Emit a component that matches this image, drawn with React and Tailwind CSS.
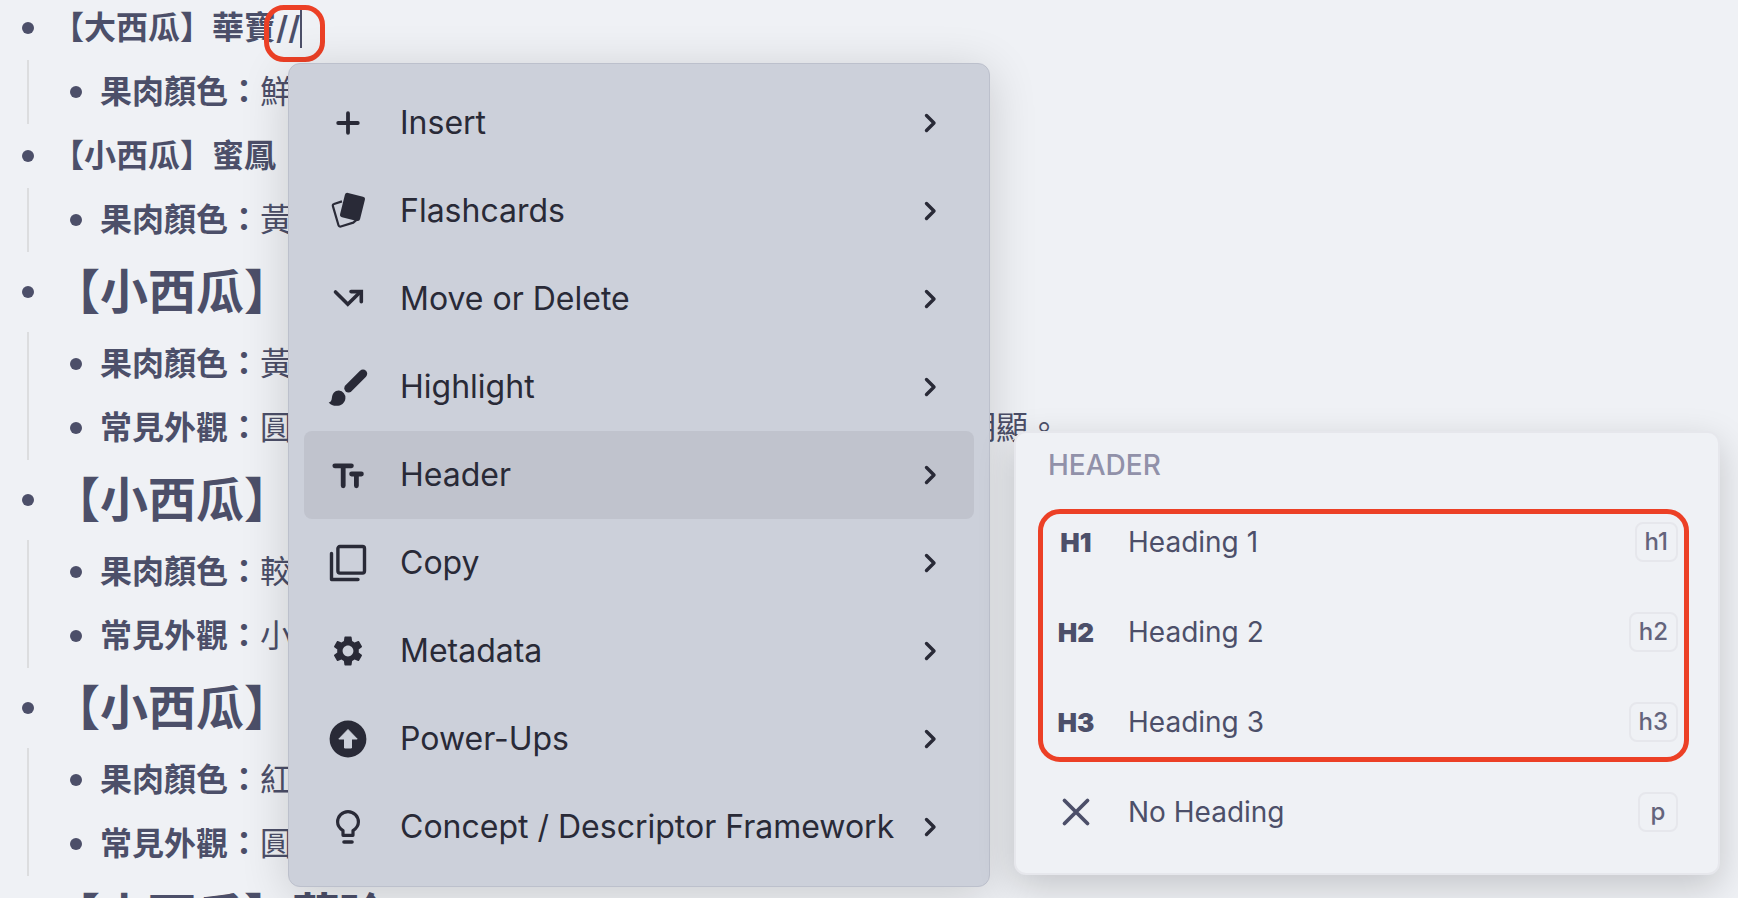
import React from "react";
import { MdSettings } from "react-icons/md";

const outline = [
    { title: "【大西瓜】華寶", typing: "//", children: [{ label: "果肉顏色", start: "鮮" }] },
    { title: "【小西瓜】蜜鳳", children: [{ label: "果肉顏色", start: "黃" }] },
    {
        title: "【小西瓜】",
        big: true,
        children: [
            { label: "果肉顏色", start: "黃" },
            { label: "常見外觀", start: "圓", end: "明顯。" },
        ],
    },
    {
        title: "【小西瓜】",
        big: true,
        children: [
            { label: "果肉顏色", start: "較" },
            { label: "常見外觀", start: "小" },
        ],
    },
    {
        title: "【小西瓜】",
        big: true,
        children: [
            { label: "果肉顏色", start: "紅" },
            { label: "常見外觀", start: "圓" },
        ],
    },
    { title: "【小西瓜】華玲", big: true, children: [] },
];

const PlusIcon = () => (
    <svg viewBox="0 0 40 40" className="w-10 h-10" fill="none" stroke="currentColor" strokeWidth="3.8" strokeLinecap="round">
        <path d="M20 10.200v19.600M10.200 20h19.600" />
    </svg>
);

const CardsIcon = () => (
    <svg viewBox="0 0 40 40" className="w-10 h-10">
        <path d="M14 10.400L6 13a1.600 1.600 0 0 0-1.100 2.100l5.600 19.200a1.800 1.800 0 0 0 2.300 1.200l12.500-3.900 3.500-3" fill="none" stroke="currentColor" strokeWidth="2.2" strokeLinejoin="round" />
        <rect x="14.200" y="3.400" width="20.600" height="25" rx="2.600" transform="rotate(14 24.500 15.900)" fill="currentColor" />
    </svg>
);

const MoveIcon = () => (
    <svg viewBox="0 0 40 40" className="w-10 h-10" fill="none" stroke="currentColor" strokeWidth="3.600" strokeLinecap="round" strokeLinejoin="miter">
        <path d="M7.500 13L19.800 25.300 32.500 12.800" />
        <path d="M23 12.600h10.300v10.200" />
    </svg>
);

const BrushIcon = () => (
    <svg viewBox="0 0 40 40" className="w-10 h-10">
        <path d="M20.500 21.300L35 6.800" stroke="currentColor" strokeWidth="8.400" strokeLinecap="round" />
        <path d="M11 23.600a7 7 0 0 1 6.400 7.800c-.500 4.600-4.200 7.400-9 7.400-3.200 0-6-1-7.700-3.400 2.300-.400 2.800-1.700 3.200-4.700.600-4.200 3-7.300 7.100-7.100z" fill="currentColor" />
    </svg>
);

const HeaderIcon = () => (
    <svg viewBox="0 0 40 40" className="w-10 h-10" fill="none" stroke="currentColor" strokeWidth="4.800" strokeLinecap="round">
        <path d="M6.800 10.800h16.600M15.200 10.800v20" />
        <path d="M23.600 19h9.800M28.400 19v11.800" />
    </svg>
);

const CopyIcon = () => (
    <svg viewBox="0 0 40 40" className="w-10 h-10" fill="none" stroke="currentColor" strokeWidth="3.400" strokeLinecap="round" strokeLinejoin="round">
        <rect x="9.900" y="3.500" width="26.600" height="26.600" rx="2" />
        <path d="M3.500 10.500V36.500H30" />
    </svg>
);

const PowerIcon = () => (
    <svg viewBox="0 0 40 40" className="w-10 h-10">
        <circle cx="20" cy="20" r="18.400" fill="currentColor" />
        <path d="M20 10.500l9.200 9.500h-5.700v9h-7v-9h-5.700z" fill="#ccd0da" stroke="#ccd0da" strokeWidth="1" strokeLinejoin="round" />
    </svg>
);

const BulbIcon = () => (
    <svg viewBox="0 0 40 40" className="w-10 h-10" fill="none" stroke="currentColor" strokeWidth="3.200">
        <path d="M15 28.300v-4.700c-3.300-2.200-5.400-5-5.400-8.600a10.400 10.400 0 0 1 20.800 0c0 3.600-2.100 6.400-5.400 8.600v4.700z" strokeLinejoin="round" />
        <path d="M16 35h8" strokeWidth="3.600" strokeLinecap="round" />
    </svg>
);

const menu = [
    { name: "Insert", icon: <PlusIcon /> },
    { name: "Flashcards", icon: <CardsIcon /> },
    { name: "Move or Delete", icon: <MoveIcon /> },
    { name: "Highlight", icon: <BrushIcon /> },
    { name: "Header", icon: <HeaderIcon />, active: true },
    { name: "Copy", icon: <CopyIcon /> },
    { name: "Metadata", icon: <MdSettings className="w-9 h-9" /> },
    { name: "Power-Ups", icon: <PowerIcon /> },
    { name: "Concept / Descriptor Framework", icon: <BulbIcon /> },
];

const headings = [
    { mark: "H1", name: "Heading 1", shortcut: "h1" },
    { mark: "H2", name: "Heading 2", shortcut: "h2" },
    { mark: "H3", name: "Heading 3", shortcut: "h3" },
];

const Bullet = () => <span className="w-3 h-3 shrink-0 rounded-full bg-[#4c4f69]" />;

const Chevron = () => (
    <svg viewBox="0 0 20 20" className="w-5 h-5 shrink-0" fill="none" stroke="currentColor" strokeWidth="3.400" strokeLinecap="round" strokeLinejoin="round">
        <path d="M6.500 2.500L14 10l-7.500 7.500" />
    </svg>
);

const HeadingItem = ({ mark, name, shortcut }) => (
    <button className="h-[90px] w-full flex items-center pl-8 pr-10 text-left">
        <span className="w-14 flex justify-center text-[26px] font-black">{mark}</span>
        <span className="flex-1 pl-6 text-[28px]">{name}</span>
        <kbd className="h-10 min-w-10 flex items-center justify-center rounded-lg border-2 border-[#e6e7ec] px-2 [font-family:Inter,sans-serif] text-2xl font-medium text-[#64647c]">
            {shortcut}
        </kbd>
    </button>
);

const App = () => {
    return (
        <div className="relative h-screen overflow-hidden bg-[#eff1f5] [font-family:Inter,'Noto_Sans_CJK_TC',sans-serif] text-[#4c4f69]">
            <ul className="-mt-1 text-[32px] leading-[64px] whitespace-nowrap">
                {outline.map((item, i) => (
                    <li key={i}>
                        <div className={item.big ? "h-20 flex items-center pl-[22px] text-5xl font-bold" : "h-16 flex items-center pl-[22px] font-bold"}>
                            <Bullet />
                            <span className="pl-[18px]">{item.title}</span>
                            {item.typing && <span className="font-semibold">{item.typing}</span>}
                            {item.typing && <span className="w-[2px] h-10 bg-[#4c4f69]" />}
                        </div>
                        {item.children.length > 0 && (
                            <ul className="ml-[27px] border-l-2 border-[#dcdddf]">
                                {item.children.map((child) => (
                                    <li key={child.label} className="h-16 flex items-center pl-[41px]">
                                        <Bullet />
                                        <b className="pl-[18px]">{child.label}：</b>
                                        <span>{child.start}</span>
                                        {child.end && <span className="pl-[672px]">{child.end}</span>}
                                    </li>
                                ))}
                            </ul>
                        )}
                    </li>
                ))}
            </ul>

            <div className="absolute left-[264px] top-[5px] w-[61px] h-[57px] rounded-[20px] border-5 border-[#ec4026] pointer-events-none" />

            <div className="absolute left-[288px] top-[63px] w-[702px] rounded-xl border border-[#bcc0cc] bg-[#ccd0da] p-[15px] text-[#292a37] shadow-[0_8px_48px_rgba(0,0,0,0.16)]">
                {menu.map((item) => (
                    <button key={item.name} className={item.active ? "h-[88px] w-full flex items-center rounded-lg bg-[#c0c3cd] pl-6 pr-[34px] text-left" : "h-[88px] w-full flex items-center rounded-lg pl-6 pr-[34px] text-left"}>
                        <span className="w-10 flex justify-center">{item.icon}</span>
                        <span className="flex-1 pl-8 text-[32px]">{item.name}</span>
                        <Chevron />
                    </button>
                ))}
            </div>

            <div className="absolute left-[1014px] top-[431px] w-[706px] rounded-xl border-2 border-[#e6e7ec] bg-[#eff1f5] pb-4 shadow-[0_12px_36px_rgba(0,0,0,0.18)]">
                <h2 className="h-16 flex items-center pl-8 text-[28px] font-medium text-[#9191a9]">HEADER</h2>
                {headings.map((item) => (
                    <HeadingItem key={item.name} {...item} />
                ))}
                <HeadingItem
                    mark={
                        <svg viewBox="0 0 30 30" className="w-[30px] h-[30px]" fill="none" stroke="currentColor" strokeWidth="3.800" strokeLinecap="round">
                            <path d="M3.500 3.500l23 23M26.500 3.500l-23 23" />
                        </svg>
                    }
                    name="No Heading"
                    shortcut="p"
                />
            </div>

            <div className="absolute left-[1038px] top-[509px] w-[651px] h-[253px] rounded-[22px] border-5 border-[#ec4026] pointer-events-none" />
        </div>
    );
};

export default App;
